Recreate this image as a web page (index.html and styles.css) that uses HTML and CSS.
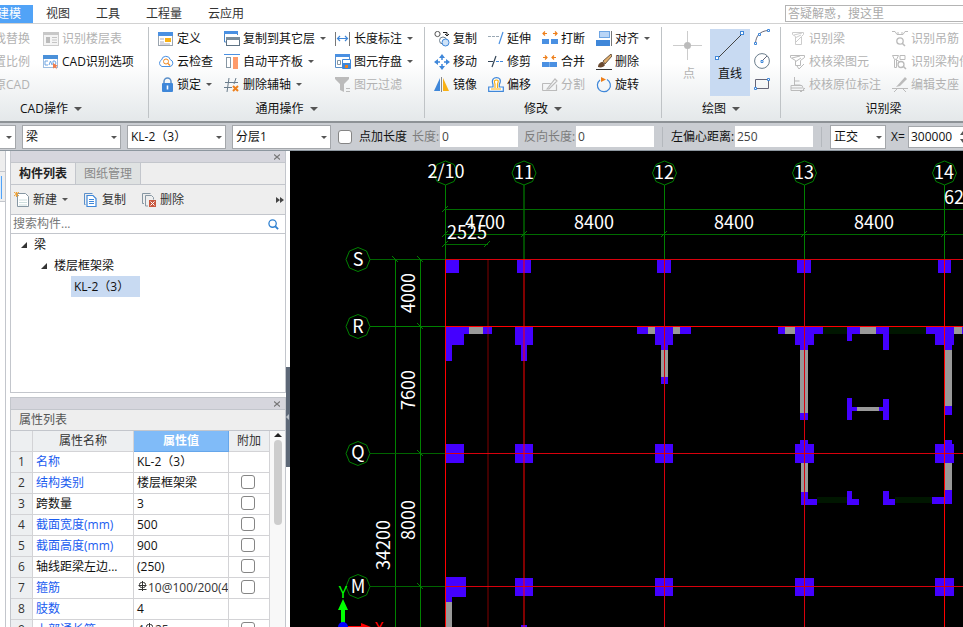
FILE: index.html
```
<!DOCTYPE html>
<html lang="zh-CN">
<head>
    <meta charset="UTF-8">
    <meta name="viewport" content="width=device-width, initial-scale=1.0">
    <title>建模</title>
    <link rel="stylesheet" href="styles.css">
</head>
<body>
    <nav class="tabs">
        <button class="tab active">建模</button>
        <button class="tab">视图</button>
        <button class="tab">工具</button>
        <button class="tab">工程量</button>
        <button class="tab">云应用</button>
        <input class="help-search" type="text" placeholder="答疑解惑，搜这里" aria-label="答疑解惑">
    </nav>

    <div class="ribbon">
        <section class="group group-cad">
            <div class="tools">
                <button class="tool" disabled><svg class="icon" viewBox="0 0 16 16"><circle cx="7" cy="7" r="5" fill="none" stroke="#bbb"/></svg>查找替换</button>
                <button class="tool" disabled><svg class="icon" viewBox="0 0 16 16"><path d="M1 14h14L1 3z" fill="none" stroke="#bbb"/></svg>设置比例</button>
                <button class="tool" disabled><svg class="icon" viewBox="0 0 16 16"><path d="M3 8a5 5 0 1 1 5 5" fill="none" stroke="#bbb"/></svg>还原CAD</button>
                <button class="tool" disabled><svg class="icon" viewBox="0 0 16 16"><rect x=".5" y="1.500" width="15" height="13" fill="#f4f4f4" stroke="#ccc"/><path d="M0 1h16v3H0z" fill="#c8c8c8"/><path d="M3 6h4v6H3z" fill="#bbb"/><path d="M9 6.500h5M9 9h5M9 11.500h5" stroke="#c4c4c4"/></svg>识别楼层表</button>
                <button class="tool"><svg class="icon" viewBox="0 0 16 16"><rect x=".5" y="1.500" width="14" height="12" fill="#fff" stroke="#9dbde0"/><path d="M0 1h15v4H0z" fill="#4a90d9"/><path d="M5 7H2v4h3M6 11l1.500-4L9 11M10 7h2l1 2-1 2h-2z" fill="none" stroke="#6ea5e3"/><path d="M10 9l5 3-2 .500 1 3-2-2-2 1z" fill="#f07d4b"/></svg>CAD识别选项</button>
            </div>
            <button class="group-title">CAD操作<i class="caret big"></i></button>
        </section>

        <section class="group group-common">
            <div class="tools">
                <button class="tool"><svg class="icon" viewBox="0 0 16 16"><rect x=".5" y="1.500" width="14" height="13" fill="#fff" stroke="#9aa4ae"/><path d="M0 1h15v4H0z" fill="#4a90e2"/><path d="M2 8h4M2 11h4M2 13h10" stroke="#aab"/><path d="M7 7h6v4H7z" fill="#f9b115"/></svg>定义</button>
                <button class="tool"><svg class="icon" viewBox="0 0 16 16"><path d="M4 12.500a3.500 3.500 0 0 1-.5-6.500 4.500 4.500 0 0 1 8.800-.300A3.500 3.500 0 0 1 12 12.500z" fill="#fff" stroke="#4a90e2"/><circle cx="8" cy="7.500" r="2.500" fill="none" stroke="#f08a24"/><path d="M10 9.500l2 2" stroke="#f08a24" stroke-width="1.300"/></svg>云检查</button>
                <button class="tool"><svg class="icon" viewBox="0 0 16 16"><path d="M6 7V4.500a3.500 3.500 0 0 1 7 0V7" fill="none" stroke="#5b8fc9" stroke-width="1.500"/><rect x="4" y="6" width="11" height="9" rx="1" fill="#3f87d9"/><path d="M9.500 8.500v4" stroke="#fff" stroke-width="1.600"/></svg>锁定<i class="caret"></i></button>
                <button class="tool"><svg class="icon" viewBox="0 0 16 16"><path d="M2.500 11H.5V1.500h13V4" fill="#fff" stroke="#4a86c8"/><path d="M0 0h14v3H0z" fill="#4a90e2"/><rect x="2.500" y="6.500" width="13" height="8" fill="#fff" stroke="#5f7384"/><path d="M2 6h14v3H2z" fill="#7b8d9b"/></svg>复制到其它层<i class="caret"></i></button>
                <button class="tool"><svg class="icon" viewBox="0 0 16 16"><path d="M0 .5h16" stroke="#4a90e2"/><rect x="2.500" y="3.500" width="4" height="10" fill="#fff" stroke="#8797a3"/><path d="M9 3h5v12H9z" fill="#ff9b6a"/></svg>自动平齐板<i class="caret"></i></button>
                <button class="tool"><svg class="icon" viewBox="0 0 16 16"><path d="M5 1L3 15M12 1l-2 6M1 5.500h13M0 10.500h8" fill="none" stroke="#6b7d8c"/><path d="M9 9l5 5M14 9l-5 5" stroke="#ee7f1a" stroke-width="2"/></svg>删除辅轴<i class="caret"></i></button>
                <button class="tool"><svg class="icon" viewBox="0 0 16 16"><path d="M.5 1v14M14.500 1v14" stroke="#777"/><path d="M2 7.500h11M5 5L2.500 7.500 5 10M10 5l2.500 2.500L10 10" fill="none" stroke="#3f87d9" stroke-width="1.200"/></svg>长度标注<i class="caret"></i></button>
                <button class="tool"><svg class="icon" viewBox="0 0 16 16"><path d="M.5 1.500h14v12H.5z" fill="#fff" stroke="#5b8fc9"/><path d="M0 0h15v3H0z" fill="#4a90e2"/><path d="M2.500 6.500h3v4h-3z" fill="none" stroke="#8797a3"/><path d="M7.500 5.500h8v9h-8z" fill="#fff" stroke="#3f87d9"/><path d="M8 9h7v5H8z" fill="#3f87d9"/><path d="M10 11h3v3h-3z" fill="#ee7f1a"/></svg>图元存盘<i class="caret"></i></button>
                <button class="tool" disabled><svg class="icon" viewBox="0 0 16 16"><path d="M0 0h14v2L9 7v8l-4-2V7L0 2z" fill="#bbb"/><path d="M11 11.500h4M11 14.500h4" stroke="#bbb"/></svg>图元过滤</button>
            </div>
            <button class="group-title">通用操作<i class="caret big"></i></button>
        </section>

        <section class="group group-modify">
            <div class="tools">
                <button class="tool"><svg class="icon" viewBox="0 0 16 16"><circle cx="3.500" cy="3" r="2.600" fill="#fff" stroke="#555"/><path d="M9 1.500h4v3M11 3l2 2 2-2" fill="none" stroke="#222"/><circle cx="9" cy="9.500" r="3.500" fill="#fff" stroke="#6b7d8c"/><circle cx="11.500" cy="11.500" r="3.500" fill="#cfe3f8" stroke="#3f87d9"/></svg>复制</button>
                <button class="tool"><svg class="icon" viewBox="0 0 16 16"><path d="M8 0l3 4H5zM8 16l3-4H5zM0 8l4-3v6zM16 8l-4-3v6z" fill="#3f87d9"/><path d="M8 4v2M8 10v2M4 8h2M10 8h2" stroke="#3f87d9" stroke-width="1.500"/></svg>移动</button>
                <button class="tool"><svg class="icon" viewBox="0 0 16 16"><path d="M6 1v13H0z" fill="#3f87d9"/><path d="M9 1v13h6z" fill="#f9b115"/><path d="M7.500 0v15" stroke="#888"/></svg>镜像</button>
                <button class="tool"><svg class="icon" viewBox="0 0 16 16"><path d="M0 5.500h11" stroke="#9aa8b4" stroke-dasharray="3 1"/><path d="M15 1l-4 12" stroke="#4a90e2" stroke-width="1.200"/></svg>延伸</button>
                <button class="tool"><svg class="icon" viewBox="0 0 16 16"><path d="M0 7.500h5M8 2L4 13" stroke="#345" stroke-width="1.200"/><path d="M8 7.500h8" stroke="#3f87d9" stroke-dasharray="3 1"/></svg>修剪</button>
                <button class="tool"><svg class="icon" viewBox="0 0 16 16"><path d="M.7 14.300h14.600V10h-4V7.500C14 2 11 .7 8.500.7S3 2 5 7.500V10H.7z" fill="#fff" stroke="#3f87d9" stroke-width="1.200"/><path d="M3 12h10M7 11V7C5.500 3.500 7 3 8.500 3s2.500.5 1 4v4" fill="none" stroke="#f9b115" stroke-width="1.200"/></svg>偏移</button>
                <button class="tool"><svg class="icon" viewBox="0 0 16 16"><path d="M0 8h7v5H0zM9 8h7v5H9z" fill="#4a90e2"/><path d="M5 2.500H1M3 .5L1 2.500l2 2M11 2.500h4M13 .5l2 2-2 2" fill="none" stroke="#ee7f1a" stroke-width="1.200"/></svg>打断</button>
                <button class="tool"><svg class="icon" viewBox="0 0 16 16"><path d="M0 8h15v5H0z" fill="#4a90e2"/><path d="M7.500 8v5" stroke="#7eb3ee"/><path d="M1 3.500h4M3 1.500l2 2-2 2M14 3.500h-4M12 1.500l-2 2 2 2" fill="none" stroke="#ee7f1a" stroke-width="1.200"/></svg>合并</button>
                <button class="tool" disabled><svg class="icon" viewBox="0 0 16 16"><path d="M.5 6.500h8M.5 13.500h14v-6M.5 6.500v7M5 12L13 2l2 2-8 8z" fill="none" stroke="#bbb" stroke-width="1.200"/></svg>分割</button>
                <button class="tool"><svg class="icon" viewBox="0 0 16 16"><rect x="3.500" y=".5" width="10" height="6" fill="#b9d5f6" stroke="#6ea5e3"/><path d="M0 9h14v6H0z" fill="#3f87d9"/><path d="M15.500 0v15" stroke="#777"/></svg>对齐<i class="caret"></i></button>
                <button class="tool"><svg class="icon" viewBox="0 0 16 16"><path d="M15 0L7 7l2 3 7-8z" fill="#e0ad6c" stroke="#4b3a28" stroke-width=".8"/><path d="M2 13c0-3 2-5 5-5l2 3c-1 2-4 3-7 2z" fill="#6b4a2f"/><path d="M0 15.500h16" stroke="#333"/></svg>删除</button>
                <button class="tool"><svg class="icon" viewBox="0 0 16 16"><path d="M11 2.500a6.500 6.500 0 1 1-7 .5" fill="none" stroke="#3f87d9" stroke-width="1.200"/><path d="M5 0l5 2.500L5 5z" fill="#ee7f1a"/></svg>旋转</button>
            </div>
            <button class="group-title">修改<i class="caret big"></i></button>
        </section>

        <section class="group group-draw">
            <div class="draw-tools">
                <button class="big-tool" disabled><svg class="draw-icon" viewBox="0 0 32 36"><path d="M14.500 2v11M14.500 20v11M0 16.500h11M18 16.500h11" stroke="#ccc"/><circle cx="14.500" cy="16.500" r="3.500" fill="#bbb"/></svg>点</button>
                <button class="big-tool selected"><svg class="draw-icon" viewBox="0 0 32 36"><path d="M3.500 29.500l25-25" stroke="#444"/><rect x="1.500" y="27.500" width="3" height="3" fill="#fff" stroke="#3f87d9"/><rect x="26.500" y="2.500" width="3" height="3" fill="#fff" stroke="#3f87d9"/></svg>直线</button>
                <div class="shapes">
                    <button class="shape" aria-label="弧"><svg class="icon" viewBox="0 0 16 16"><path d="M1.500 14C2 7 6 2 14 1.500" fill="none" stroke="#667"/><path d="M.5 13.500h2v2h-2zM4.500 4.500h2v2h-2zM13.500.5h2v2h-2z" fill="#fff" stroke="#3f87d9"/></svg></button>
                    <button class="shape" aria-label="圆"><svg class="icon" viewBox="0 0 16 16"><circle cx="8" cy="8" r="7.400" fill="none" stroke="#6b7d8c"/><path d="M8 8l5-5" stroke="#667"/><path d="M7 7.500h2v2H7z" fill="#fff" stroke="#3f87d9"/></svg></button>
                    <button class="shape" aria-label="矩形"><svg class="icon" viewBox="0 0 16 16"><path d="M1.500 2.500h13v9h-13z" fill="none" stroke="#667"/><path d="M.5 10.500h2v2h-2zM13.500 1.500h2v2h-2z" fill="#fff" stroke="#3f87d9"/></svg></button>
                </div>
            </div>
            <button class="group-title">绘图<i class="caret big"></i></button>
        </section>

        <section class="group group-detect">
            <div class="tools">
                <button class="tool" disabled><svg class="icon" viewBox="0 0 16 16"><path d="M2.500 1.500h11v2l-2 2v8h-6v-8l-3-2zM4 4l8-2M5 7l6-3M6 11l5-5" fill="none" stroke="#ccc"/></svg>识别梁</button>
                <button class="tool" disabled><svg class="icon" viewBox="0 0 16 16"><path d="M.5 1.500h14v2l-4 3v5h-5v-5l-5-3zM2 4l8-2M5 8l6-4M7 12l2 3 5-5" fill="none" stroke="#bbb"/></svg>校核梁图元</button>
                <button class="tool" disabled><svg class="icon" viewBox="0 0 16 16"><path d="M4.500 0v8h6M4.500 4h5M1 8.500h11l2 5H1zM1 11h11M9 13l2 2 4-4" fill="none" stroke="#bbb"/></svg>校核原位标注</button>
                <button class="tool" disabled><svg class="icon" viewBox="0 0 16 16"><path d="M0 .5h3l2 3h6l2-3h3M6 1v3M10 1v3" fill="none" stroke="#bbb"/><circle cx="8" cy="10" r="3.200" fill="none" stroke="#bbb" stroke-width="1.300"/><path d="M10 12l3 3" stroke="#bbb" stroke-width="1.500"/></svg>识别吊筋</button>
                <button class="tool" disabled><svg class="icon" viewBox="0 0 16 16"><path d="M.5 1.500h6l-2 4v8h-2v-8zM8 1.500h5v4H8zM3 5l5 3" fill="none" stroke="#bbb"/><circle cx="9" cy="10.500" r="3" fill="none" stroke="#bbb" stroke-width="1.300"/><path d="M11 12l3 3" stroke="#bbb" stroke-width="1.500"/></svg>识别梁构件</button>
                <button class="tool" disabled><svg class="icon" viewBox="0 0 16 16"><path d="M13 0l2 2-7 7-4 1z" fill="#bbb"/><path d="M0 11.500h16M5 12l-3 3M11 12l3 3" fill="none" stroke="#bbb"/></svg>编辑支座</button>
            </div>
            <button class="group-title">识别梁</button>
        </section>
    </div>

    <form class="options">
        <span class="combo first"><select aria-label="楼层"><option>首层</option></select></span>
        <span class="combo"><select aria-label="构件类型"><option>梁</option></select></span>
        <span class="combo"><select aria-label="构件"><option>KL-2（3）</option></select></span>
        <span class="combo"><select aria-label="分层"><option>分层1</option></select></span>
        <input class="check" type="checkbox" id="addLength">
        <label class="check-label" for="addLength">点加长度</label>
        <label class="muted len-label" for="length">长度:</label>
        <input class="number" type="text" id="length" value="0">
        <label class="muted back-label" for="backLength">反向长度:</label>
        <input class="number" type="text" id="backLength" value="0">
        <span class="divider"></span>
        <label class="offset-label" for="offset">左偏心距离:</label>
        <input class="number" type="text" id="offset" value="250">
        <span class="divider"></span>
        <span class="combo ortho"><select aria-label="正交"><option>正交</option></select></span>
        <label class="x-label" for="xValue">X=</label>
        <span class="spinner"><input type="text" id="xValue" value="300000"><svg viewBox="0 0 6 12"><path d="M0 4l3-4 3 4zM0 8l3 4 3-4z" fill="#555"/></svg></span>
    </form>

    <main class="workspace">
        <div class="edge">
            <div class="edge-top"></div>
            <div class="edge-tool"><span></span></div>
            <div class="edge-body"></div>
        </div>

        <aside class="sidebar">
            <section class="panel components">
                <div class="panel-bar"><button class="close" aria-label="关闭"><svg viewBox="0 0 6 6"><path d="M0 .5l6 5M6 .5l-6 5" stroke="#777" stroke-width="1.200"/></svg></button></div>
                <div class="panel-tabs">
                    <button class="panel-tab current">构件列表</button>
                    <button class="panel-tab">图纸管理</button>
                </div>
                <div class="panel-tools">
                    <button class="tool new"><svg class="icon" viewBox="0 0 16 16"><path d="M3.500 1.500h8l3 3v10h-11z" fill="#fff" stroke="#8797a3"/><path d="M5 8h8M5 10.500h8M5 13h8" stroke="#cdd"/><path d="M0 0l5 4M5 0L0 4M2.500 0v5" stroke="#f0a030"/></svg>新建<i class="caret"></i></button>
                    <button class="tool"><svg class="icon" viewBox="0 0 16 16"><path d="M2.500 12.500H1.500V1.500h8" fill="none" stroke="#5b8fc9"/><path d="M4 3.500h6l3 3v8H4z" fill="#fff" stroke="#3f87d9" stroke-width="1.200"/><path d="M6 7.500h5M6 9.500h5M6 11.500h5" stroke="#3f87d9"/></svg>复制</button>
                    <button class="tool"><svg class="icon" viewBox="0 0 16 16"><path d="M3 11.500H1.500V1.500h8M7 14H4.500V3.500h6l2 2v2" fill="none" stroke="#8797a3"/><path d="M8 8h7v7H8z" fill="#c9583f"/><path d="M9.500 9.500l4 4M13.500 9.500l-4 4" stroke="#fff"/></svg>删除</button>
                    <button class="more" aria-label="更多"><svg viewBox="0 0 8 6"><path d="M0 0l4 3-4 3zM4 0l4 3-4 3z" fill="#444"/></svg></button>
                </div>
                <div class="filter">
                    <input type="text" placeholder="搜索构件..." aria-label="搜索构件">
                    <svg viewBox="0 0 12 12"><circle cx="5" cy="5" r="4" fill="none" stroke="#2f80d0" stroke-width="1.400"/><path d="M8 8l3 3" stroke="#2f80d0" stroke-width="2"/></svg>
                </div>
                <ul class="tree">
                    <li class="level-1"><i class="open"></i>梁</li>
                    <li class="level-2"><i class="open"></i>楼层框架梁</li>
                    <li class="level-3"><span class="picked">KL-2（3）</span></li>
                </ul>
            </section>

            <section class="panel properties">
                <div class="panel-bar"><button class="close" aria-label="关闭"><svg viewBox="0 0 6 6"><path d="M0 .5l6 5M6 .5l-6 5" stroke="#777" stroke-width="1.200"/></svg></button></div>
                <h2>属性列表</h2>
                <div class="table-area">
                    <table>
                        <colgroup><col class="c-no"><col class="c-name"><col class="c-value"><col class="c-add"></colgroup>
                        <thead>
                            <tr><th></th><th>属性名称</th><th class="active-col">属性值</th><th>附加</th></tr>
                        </thead>
                        <tbody>
                            <tr><th>1</th><td class="key">名称</td><td>KL-2（3）</td><td></td></tr>
                            <tr><th>2</th><td class="key">结构类别</td><td>楼层框架梁</td><td class="add"><input class="check" type="checkbox" aria-label="结构类别"></td></tr>
                            <tr><th>3</th><td>跨数量</td><td>3</td><td class="add"><input class="check" type="checkbox" aria-label="跨数量"></td></tr>
                            <tr><th>4</th><td class="key">截面宽度(mm)</td><td>500</td><td class="add"><input class="check" type="checkbox" aria-label="截面宽度"></td></tr>
                            <tr><th>5</th><td class="key">截面高度(mm)</td><td>900</td><td class="add"><input class="check" type="checkbox" aria-label="截面高度"></td></tr>
                            <tr><th>6</th><td>轴线距梁左边...</td><td>(250)</td><td class="add"><input class="check" type="checkbox" aria-label="轴线距梁左边"></td></tr>
                            <tr><th>7</th><td class="key">箍筋</td><td class="rebar"><svg viewBox="0 0 10 10"><path d="M5 0v10M1 8.500h8M1 4.500h8" stroke="#333"/><rect x="2" y="1.500" width="6" height="5" rx="2" fill="none" stroke="#333"/></svg>10@100/200(4)</td><td class="add"><input class="check" type="checkbox" aria-label="箍筋"></td></tr>
                            <tr><th>8</th><td class="key">肢数</td><td>4</td><td></td></tr>
                            <tr><th>9</th><td class="key">上部通长筋</td><td class="rebar">4<svg viewBox="0 0 10 10"><path d="M5 0v10M1 8.500h8M1 4.500h8" stroke="#333"/><rect x="2" y="1.500" width="6" height="5" rx="2" fill="none" stroke="#333"/></svg>25</td><td class="add"><input class="check" type="checkbox" aria-label="上部通长筋"></td></tr>
                        </tbody>
                    </table>
                    <div class="scrollbar"><i class="up"></i><div class="thumb"></div></div>
                </div>
            </section>
        </aside>

        <div class="splitter"><button class="handle" aria-label="收起"></button></div>

        <div class="canvas">
            <svg class="drawing" width="1600" height="1000">
                <defs>
                    <path id="bubble" d="M0-12L8.500-8.500 12 0 8.500 8.500 0 12-8.500 8.500-12 0-8.500-8.500z"/>
                    <path id="tick" d="M-3 3L3-3"/>
                    <path id="tickBack" d="M-3-3L3 3"/>
                </defs>

                <!-- openings -->
                <path fill="#001600" d="M533 176h24v7h-24zM599 176h37v7h-37zM527 346h30v6h-30zM605 346h37v6h-37z"/>

                <!-- walls -->
                <path fill="#999" d="M179 176h14v7h-14zM358 176h7v7h-7zM383 176h7v7h-7zM371 199h7v27h-7zM495 176h10v7h-10zM510 199h8v63h-8zM570 176h16v7h-16zM664 176h9v7h-9zM655 199h7v56h-7zM567 256h22v4h-22zM511 312h7v29h-7zM655 312h7v27h-7zM155 451h7v60h-7z"/>

                <!-- columns -->
                <g fill="#40f">
                    <path d="M155 109h14v13h-14zM227 109h14v13h-14zM367 109h14v13h-14zM507 109h14v13h-14zM648 109h13v13h-13z"/>
                    <path d="M155 176h24v7h-5v11h-12v16h-7zM193 176h9v7h-9zM225 176h18v18h-6v16h-6v-16h-6z"/>
                    <path d="M347 176h11v7h-11zM365 176h18v18h-5v5h-7v-5h-6zM390 176h11v7h-11zM371 226h7v7h-7z"/>
                    <path d="M488 176h7v7h-7zM505 176h28v7h-9v11h-6v5h-8v-5h-5zM510 262h8v7h-8z"/>
                    <path d="M557 176h13v7h-8v7h-5zM586 176h13v23h-6v-16h-7z"/>
                    <path d="M636 176h28v18h-2v5h-7v-5h-10v-11h-9zM655 255h7v9h-7zM672 176h9v7h-9z"/>
                    <path d="M557 247h5v9h5v4h-5v9h-5zM593 248h6v21h-6v-9h-4v-4h4z"/>
                    <path d="M155 293h19v19h-19zM225 293h18v19h-18zM365 293h18v19h-18zM505 293h5v-4h8v4h6v19h-19zM645 293h10v-4h7v4h2v19h-19z"/>
                    <path d="M511 341h7v7h9v6h-16zM557 340h5v8h7v6h-12zM593 340h6v8h6v6h-12zM642 346h13v-7h7v14h-20z"/>
                    <path d="M155 426h21v20h-14v5h-7zM225 427h18v18h-18zM365 427h18v18h-18zM505 427h19v18h-19zM645 427h19v18h-19zM231 474h6v40h-6z"/>
                </g>

                <!-- dimension lines -->
                <g stroke="#008000" fill="none">
                    <path d="M155.500 34v74M374.500 34v74M514.500 34v74M654.500 34v74"/>
                    <path d="M234 34v74" stroke="#004c00" stroke-width="2"/>
                    <path d="M155 58.500h1445M155 83.500h1445M155 93.500h43" stroke="#006c00"/>
                    <path d="M105.500 108v892M130.500 108v892"/>
                    <path d="M80 108.500h75M80 302.500h75M80 435.500h75" stroke="#006400"/>
                    <path d="M80 175.500h75"/>
                    <use href="#bubble" x="155.500" y="22"/>
                    <use href="#bubble" x="234" y="22"/>
                    <use href="#bubble" x="374.500" y="22"/>
                    <use href="#bubble" x="514.500" y="22"/>
                    <use href="#bubble" x="654.500" y="22"/>
                    <use href="#bubble" x="68" y="108.500"/>
                    <use href="#bubble" x="68" y="175.500"/>
                    <use href="#bubble" x="68" y="302.500"/>
                    <use href="#bubble" x="68" y="435.500"/>
                    <use href="#tick" x="155" y="58"/>
                    <use href="#tick" x="155" y="83"/>
                    <use href="#tick" x="155" y="93"/>
                    <use href="#tick" x="197" y="93"/>
                    <use href="#tick" x="234" y="83"/>
                    <use href="#tick" x="374" y="83"/>
                    <use href="#tick" x="514" y="83"/>
                    <use href="#tick" x="654" y="83"/>
                    <use href="#tickBack" x="105" y="108"/>
                    <use href="#tickBack" x="130" y="108"/>
                    <use href="#tickBack" x="130" y="175"/>
                    <use href="#tickBack" x="130" y="302"/>
                    <use href="#tickBack" x="130" y="435"/>
                </g>

                <!-- grid axes -->
                <g stroke="#f00">
                    <path d="M155.500 108v892M654.500 108v892M155 175.500h1445"/>
                    <path d="M374.500 108v892M514.500 108v892M155 108.500h1445M155 302.500h1445M155 435.500h1445" stroke="#d8000c"/>
                    <path d="M234 108v892" stroke-width="2" stroke-opacity=".5"/>
                    <path d="M198 108v892" stroke-width="2" stroke-opacity=".25"/>
                </g>

                <g class="labels">
                    <text x="156" y="27">2/10</text>
                    <text x="234" y="28">11</text>
                    <text x="374" y="28">12</text>
                    <text x="514" y="28">13</text>
                    <text x="654" y="28">14</text>
                    <text x="195" y="78">4700</text>
                    <text x="177" y="88">2525</text>
                    <text x="304" y="78">8400</text>
                    <text x="444" y="78">8400</text>
                    <text x="584" y="78">8400</text>
                    <text x="674" y="53">6200</text>
                    <text x="68" y="115">S</text>
                    <text x="68" y="182">R</text>
                    <text x="68" y="308">Q</text>
                    <text x="68" y="442">M</text>
                    <text transform="translate(125 142) rotate(-90)">4000</text>
                    <text transform="translate(125 239) rotate(-90)">7600</text>
                    <text transform="translate(125 369) rotate(-90)">8000</text>
                    <text transform="translate(100 394) rotate(-90)">34200</text>
                </g>

                <!-- UCS marker -->
                <g class="ucs">
                    <path fill="#0f0" d="M51 476v-17h-3l5-11 5 11h-3v17z"/>
                    <path fill="#f00" d="M58 475h13v-3l10 4-10 4v-3H58z"/>
                    <circle cx="53" cy="476" r="5" fill="#00f"/>
                    <text x="53" y="447" fill="#0f0">Y</text>
                    <text x="89" y="483" fill="#f00">X</text>
                </g>
            </svg>
        </div>
    </main>
</body>
</html>
```
FILE: styles.css
```
* {
    box-sizing: border-box;
}
body {
    margin: 0;
    height: 100vh;
    overflow: hidden;
    display: flex;
    flex-direction: column;
    font: 12px/18px "Open Sans", "Noto Sans CJK SC", sans-serif;
    color: #111;
    background-color: #fff;
}
button, input, select {
    font: inherit;
    color: inherit;
    margin: 0;
    padding: 0;
    border: none;
    border-radius: 0;
    background: none;
    outline: none;
}
svg {
    display: block;
    flex: none;
}

/* tabs */
.tabs {
    flex: none;
    display: flex;
    align-items: flex-end;
    height: 24px;
    border-bottom: 1px solid #d2d2d2;
}
.tab {
    flex: none;
    height: 18px;
    padding: 0 13px;
    color: #333;
}
.tab.active {
    margin-left: -16px;
    padding: 0 12px 0 13px;
    background-color: #51a3f7;
    color: #fff;
}
.help-search {
    width: 178px;
    height: 17px;
    margin: 0 0 1px auto;
    padding: 0 2px;
    border: 1px solid #b4b4b4;
    border-right: none;
}
.help-search::placeholder {
    color: #aaa;
}

/* ribbon */
.ribbon {
    flex: none;
    display: flex;
    padding-top: 3px;
    overflow: hidden;
    background: linear-gradient(#fff 40%, #e4e8ea);
    border-bottom: 2px solid #8d9296;
}
.group {
    flex: none;
    display: flex;
    flex-direction: column;
    border-right: 1px solid #bfc3c6;
    margin-bottom: 3px;
}
.tools {
    display: grid;
    grid-template-rows: repeat(3, 23px);
    grid-auto-flow: column;
    padding-left: 9px;
}
.group-cad {
    width: 195px;
    margin-left: -46px;
}
.group-cad .tools {
    grid-template-columns: 80px 1fr;
}
.group-common {
    width: 276px;
}
.group-common .tools {
    grid-template-columns: 66px 111px 1fr;
}
.group-modify {
    width: 237px;
}
.group-modify .tools {
    grid-template-columns: 54px 54px 54px 1fr;
}
.group-draw {
    width: 119px;
}
.group-detect {
    width: 206px;
}
.group-detect .tools {
    grid-template-columns: 102px 1fr;
}
.tool {
    display: flex;
    align-items: center;
    gap: 3px;
    white-space: nowrap;
}
button:disabled {
    color: #b2b2b2;
}
.icon {
    width: 16px;
    height: 16px;
}
.caret {
    width: 0;
    height: 0;
    margin-left: 2px;
    border: 3px solid transparent;
    border-top-color: #555;
    border-bottom: none;
}
.caret.big {
    margin-left: 6px;
    border-width: 4px 4px 0;
}
.group-title {
    display: flex;
    align-items: center;
    justify-content: center;
    height: 22px;
    padding-top: 4px;
}
.draw-tools {
    display: flex;
    height: 69px;
    padding: 2px 0 0 7px;
}
.big-tool {
    display: flex;
    flex-direction: column;
    align-items: center;
    width: 40px;
    height: 67px;
}
.big-tool.selected {
    background-color: #c8daf2;
    margin-left: 1px;
}
.draw-icon {
    width: 32px;
    height: 36px;
}
.shapes {
    display: flex;
    flex-direction: column;
    justify-content: space-between;
    height: 64px;
    padding-left: 4px;
}

/* option bar */
.options {
    flex: none;
    display: flex;
    align-items: center;
    height: 28px;
    margin: 0;
    overflow: hidden;
    white-space: nowrap;
    background-color: #cacdd2;
    border-bottom: 1px solid #8d979f;
}
.options > * {
    flex: none;
}
.combo {
    position: relative;
    width: 99px;
    height: 24px;
    margin-right: 6px;
    background-color: #fff;
    border: 1px solid #a4a7ab;
}
.combo.first {
    margin-left: -83px;
}
.combo.ortho {
    width: 56px;
    margin-right: 5px;
}
.combo select {
    appearance: none;
    width: 100%;
    height: 22px;
    padding: 0 3px;
}
.combo::after {
    content: "";
    position: absolute;
    right: 3px;
    top: 10px;
    border: 3px solid transparent;
    border-top-color: #555;
    border-bottom: none;
    pointer-events: none;
}
.check {
    appearance: none;
    display: block;
    width: 14px;
    height: 14px;
    background-color: #fff;
    border: 1px solid #858585;
    border-radius: 3px;
}
.options .check {
    margin: 0 7px 0 1px;
}
.muted {
    color: #7c7c7c;
}
.check-label {
    width: 53px;
}
.len-label {
    width: 28px;
}
.back-label {
    width: 58px;
    padding-left: 6px;
}
.offset-label {
    width: 64px;
}
.number {
    width: 78px;
    height: 21px;
    padding: 0 2px;
    color: #444;
    background-color: #fff;
}
.divider {
    width: 1px;
    height: 20px;
    margin: 0 8px;
    background-color: #b4b8bd;
}
.x-label {
    width: 17px;
}
.spinner {
    display: flex;
    align-items: center;
    width: 62px;
    height: 22px;
    background-color: #fff;
    border: 1px solid #a4a7ab;
}
.spinner input {
    width: 51px;
    padding-left: 2px;
}
.spinner svg {
    width: 6px;
    height: 12px;
}

/* workspace */
.workspace {
    flex: 1;
    display: flex;
    min-height: 0;
}
.edge {
    flex: none;
    width: 6px;
    display: flex;
    flex-direction: column;
}
.edge > div {
    border-right: 1px solid #c3c6cc;
}
.edge-top {
    height: 21px;
    background-color: #eee;
    border-bottom: 1px solid #c3c6cc;
}
.edge-tool {
    height: 30px;
    padding-top: 4px;
    background-color: #eee;
    border-bottom: 1px solid #c3c6cc;
}
.edge-tool span {
    display: block;
    width: 2px;
    height: 23px;
    background-color: #dcebfb;
    border-right: 1px solid #51a3f7;
}
.edge-body {
    flex: 1;
}
.sidebar {
    flex: none;
    width: 276px;
    margin-left: 4px;
    display: flex;
    flex-direction: column;
}
.panel {
    display: flex;
    flex-direction: column;
    border: 1px solid #c3c6cc;
}
.components {
    flex: none;
    height: 242px;
    border-top: none;
}
.properties {
    flex: 1;
    min-height: 0;
    margin-top: 4px;
    border-bottom: none;
}
.panel-bar {
    flex: none;
    display: flex;
    align-items: center;
    justify-content: flex-end;
    height: 12px;
    padding-right: 5px;
    background-color: #d6d6dd;
    border-bottom: 1px solid #c3c6cc;
}
.close svg {
    width: 6px;
    height: 6px;
}
.panel-tabs {
    display: flex;
    height: 22px;
    background-color: #eee;
    border-bottom: 1px solid #c3c6cc;
}
.panel-tab {
    width: 65px;
    color: #888;
    background-color: #dfe2e2;
    border-right: 1px solid #c3c6cc;
}
.panel-tab.current {
    color: #222;
    font-weight: bold;
    background-color: #eee;
}
.panel-tools {
    display: flex;
    align-items: center;
    height: 30px;
    padding: 0 1px 0 3px;
    background-color: #eee;
    border-bottom: 1px solid #c3c6cc;
    color: #333;
}
.panel-tools .tool {
    width: 58px;
}
.panel-tools .tool.new {
    width: 69px;
}
.more {
    margin-left: auto;
}
.more svg {
    width: 8px;
    height: 6px;
}
.filter {
    display: flex;
    align-items: center;
    height: 19px;
    padding: 0 6px 0 2px;
    border-bottom: 1px solid #c3c6cc;
}
.filter input {
    flex: 1;
}
.filter input::placeholder {
    color: #777;
}
.filter svg {
    width: 11px;
    height: 11px;
}
.tree {
    margin: 0;
    padding: 0;
    list-style: none;
}
.tree li {
    display: flex;
    align-items: center;
    height: 21px;
}
.open {
    width: 0;
    height: 0;
    margin-right: 7px;
    border-left: 6px solid transparent;
    border-bottom: 6px solid #333;
}
.tree .level-1 {
    padding-left: 10px;
}
.tree .level-2 {
    padding-left: 30px;
}
.tree .level-3 {
    padding-left: 60px;
}
.picked {
    width: 69px;
    padding: 0 3px;
    line-height: 21px;
    background-color: #c8daf2;
}

/* properties */
h2 {
    flex: none;
    height: 21px;
    margin: 0;
    padding-left: 8px;
    font-size: 12px;
    font-weight: normal;
    line-height: 20px;
    color: #555;
    background-color: #eee;
    border-bottom: 1px solid #c3c6cc;
}
.table-area {
    flex: 1;
    display: flex;
    align-items: flex-start;
    min-height: 0;
    overflow: hidden;
}
table {
    flex: none;
    width: 259px;
    table-layout: fixed;
    border-spacing: 0;
}
.c-no {
    width: 22px;
}
.c-name {
    width: 101px;
}
.c-value {
    width: 95px;
}
.c-add {
    width: 41px;
}
th, td {
    height: 21px;
    padding: 0 3px;
    line-height: 20px;
    overflow: hidden;
    white-space: nowrap;
    border-right: 1px solid #d3d3d6;
    border-bottom: 1px solid #d3d3d6;
}
th {
    padding: 0;
    font-weight: normal;
    text-align: center;
    color: #333;
    background-color: #edeff1;
}
th.active-col {
    color: #fff;
    font-weight: bold;
    background-color: #80bbf8;
    border-color: #66a6ea;
}
.key {
    color: #1a5cf0;
}
.add {
    padding: 0 12px;
}
.add .check {
    margin-bottom: 3px;
}
.rebar {
    color: #333;
}
.rebar svg {
    display: inline-block;
    width: 11px;
    height: 10px;
    vertical-align: 1px;
}
.scrollbar {
    flex: 1;
    align-self: stretch;
    background-color: #f8f8f8;
}
.up {
    display: block;
    width: 0;
    margin: 2px auto 3px;
    border: 4px solid transparent;
    border-top: none;
    border-bottom-color: #222;
}
.thumb {
    width: 8px;
    height: 85px;
    margin: 0 auto;
    border-radius: 4px;
    background-color: #cdcdcd;
}
.splitter {
    flex: none;
    width: 4px;
    padding-top: 216px;
    background-color: #fff;
}
.handle {
    display: flex;
    align-items: center;
    width: 4px;
    height: 100px;
    background-color: #5d6877;
}
.handle::after {
    content: "";
    border: 3px solid transparent;
    border-left: none;
    border-right-color: #b8bec6;
}

/* drawing area */
.canvas {
    flex: 1;
    min-width: 0;
    overflow: hidden;
    background-color: #000;
}
.labels text {
    font: 18px "Noto Sans CJK SC", sans-serif;
    fill: #fff;
    text-anchor: middle;
}
.ucs text {
    font: 16px "Noto Sans CJK SC", sans-serif;
    text-anchor: middle;
}
```
